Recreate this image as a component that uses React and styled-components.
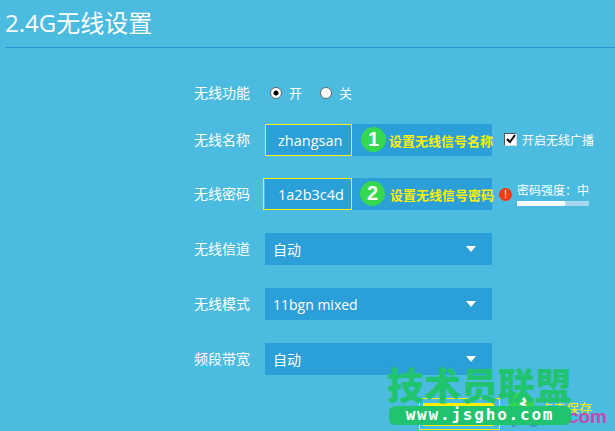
import React from "react";
import styled, { createGlobalStyle } from "styled-components";

const Global = createGlobalStyle`
  html, body { margin: 0; padding: 0; }
  body { background: #4bbbe0; }
`;

const FONT = `"Open Sans", "Noto Sans CJK SC", sans-serif`;

const Page = styled.div`
  position: relative;
  width: 615px;
  height: 431px;
  overflow: hidden;
  background: #4bbbe0;
  color: #fff;
  font-family: ${FONT};
`;
const Title = styled.h1`
  margin: 0 0 0 5px;
  height: 47px;
  border-bottom: 1px solid #2b95cf;
  font-size: 24px;
  font-weight: 400;
  line-height: 46px;
`;
const Form = styled.div`
  display: flex;
  flex-direction: column;
  padding: 35px 0 0 194px;
`;
const Row = styled.div`
  display: flex;
  align-items: center;
  height: ${(p) => p.$h || 32}px;
  margin-bottom: ${(p) => p.$mb ?? 23}px;
`;
const Label = styled.div`
  width: 71px;
  padding-bottom: 3px;
  font-size: 14px;
`;
const Radio = styled.span`
  box-sizing: border-box;
  width: 12px;
  height: 12px;
  margin: 0 7px 0 ${(p) => p.$ml || 5}px;
  border-radius: 50%;
  border: 1px solid #666;
  background: ${(p) => (p.$on ? "radial-gradient(circle, #000 0 2px, #fff 3px)" : "#fff")};
`;
const RadioText = styled.span`
  font-size: 13px;
  padding-bottom: 2px;
`;
const Field = styled.div`
  position: relative;
  display: flex;
  align-items: center;
  justify-content: space-between;
  width: 227px;
  height: 32px;
  padding: 0 16px 0 8px;
  box-sizing: border-box;
  background: #2b9fd8;
  font-size: 14px;
`;
const Arrow = styled.span`
  width: 0;
  height: 0;
  border-left: 5px solid transparent;
  border-right: 5px solid transparent;
  border-top: 6px solid #fff;
`;
const Callout = styled.div`
  position: absolute;
  top: 0;
  bottom: 0;
  left: ${(p) => p.$left}px;
  width: ${(p) => p.$w}px;
  display: flex;
  align-items: center;
  padding-left: ${(p) => p.$pad}px;
  border: 1px solid #ffef00;
  font-size: 14.5px;
  box-sizing: border-box;
`;
const Badge = styled.div`
  position: absolute;
  left: ${(p) => p.$left}px;
  top: ${(p) => p.$top}px;
  width: 25px;
  height: 25px;
  display: flex;
  align-items: center;
  justify-content: center;
  border-radius: 50%;
  background: #35d94f;
  color: #fff;
  font-family: "Liberation Sans", sans-serif;
  font-size: 20px;
  font-weight: 700;
`;
const Hint = styled.div`
  position: absolute;
  left: ${(p) => p.$left}px;
  top: ${(p) => p.$top}px;
  color: #ffef00;
  font-size: 13px;
  font-weight: 700;
  line-height: 16px;
  white-space: nowrap;
`;
const Side = styled.div`
  display: flex;
  align-items: center;
  margin-left: ${(p) => p.$ml}px;
  font-size: 12px;
`;
const Check = styled.span`
  box-sizing: border-box;
  width: 13px;
  height: 13px;
  margin: -2px 5px 0 0;
  background: #fff;
  border: 1px solid #555;
  border-right-color: #ddd;
  border-bottom-color: #ddd;
  display: flex;
  align-items: center;
  justify-content: center;
`;
const Warn = styled.span`
  width: 13px;
  height: 13px;
  margin-right: 5px;
  border-radius: 50%;
  background: #f53c0c;
  color: #fff;
  font-size: 10px;
  line-height: 13px;
  text-align: center;
`;
const Strength = styled.div`
  display: flex;
  flex-direction: column;
  gap: 2px;
  width: 72px;
  font-size: 12px;
  line-height: 17px;
`;
const Bar = styled.div`
  height: 5px;
  background: #a6d9ee;
`;
const BarFill = styled.div`
  height: 100%;
  background: #fff;
`;
const SaveFrame = styled.div`
  position: absolute;
  left: 419px;
  top: 398px;
  width: 81px;
  height: 32px;
  box-sizing: border-box;
  border: 1px solid #ffef00;
  padding: 4px 3px;
`;
const SaveInner = styled.div`
  width: 71px;
  height: 23px;
  box-sizing: border-box;
  border-top: 3px solid #ffef00;
  border-bottom: 1px solid #ffef00;
`;
const SaveHint = styled(Hint)`
  font-weight: 400;
`;
const Ghost = styled.div`
  position: absolute;
  right: 8px;
  top: 406px;
  color: #c04bb0;
  font-family: "Liberation Sans", sans-serif;
  font-size: 19px;
  font-weight: 700;
  white-space: nowrap;
`;
const GhostDim = styled.span`
  color: #3f94c4;
`;
const MarkTitle = styled.div`
  position: absolute;
  left: 387px;
  top: 356px;
  width: 186px;
  color: #20c46f;
  font-family: "Noto Sans CJK SC", sans-serif;
  font-size: 37px;
  font-weight: 900;
  line-height: 56px;
  white-space: nowrap;
`;
const MarkPill = styled.div`
  position: absolute;
  left: 389px;
  top: 406px;
  width: 182px;
  height: 19px;
  border-radius: 6px;
  background: #20c46f;
  color: #fff;
  font-family: "DejaVu Sans Mono", monospace;
  font-size: 16px;
  font-weight: 700;
  letter-spacing: 1.8px;
  line-height: 18px;
  text-align: center;
  white-space: nowrap;
`;

export default function App() {
  return (
    <Page>
      <Global />
      <Title>2.4G无线设置</Title>
      <Form>
        <Row $h={20} $mb={21}>
          <Label>无线功能</Label>
          <Radio $ml={5} $on />
          <RadioText>开</RadioText>
          <Radio $ml={18} />
          <RadioText>关</RadioText>
        </Row>
        <Row $mb={22}>
          <Label>无线名称</Label>
          <Field>
            <Callout $left={0} $w={87} $pad={12}>zhangsan</Callout>
            <Badge $left={96} $top={3}>1</Badge>
            <Hint $left={124} $top={9}>设置无线信号名称</Hint>
          </Field>
          <Side $ml={12}>
            <Check>
              <svg width="10" height="10" viewBox="0 0 10 10">
                <path d="M1 5l3 3 5-7" fill="none" stroke="#000" strokeWidth="2" />
              </svg>
            </Check>
            开启无线广播
          </Side>
        </Row>
        <Row $mb={23}>
          <Label>无线密码</Label>
          <Field>
            <Callout $left={-2} $w={89} $pad={14}>1a2b3c4d</Callout>
            <Badge $left={95} $top={3}>2</Badge>
            <Hint $left={125} $top={9}>设置无线信号密码</Hint>
          </Field>
          <Side $ml={7}>
            <Warn>!</Warn>
            <Strength>
              密码强度：中
              <Bar>
                <BarFill style={{ width: "66%" }} />
              </Bar>
            </Strength>
          </Side>
        </Row>
        <Row>
          <Label>无线信道</Label>
          <Field>自动<Arrow /></Field>
        </Row>
        <Row>
          <Label>无线模式</Label>
          <Field>11bgn mixed<Arrow /></Field>
        </Row>
        <Row>
          <Label>频段带宽</Label>
          <Field>自动<Arrow /></Field>
        </Row>
      </Form>
      <SaveFrame>
        <SaveInner />
      </SaveFrame>
      <Badge $left={509} $top={392}>3</Badge>
      <SaveHint $left={540} $top={400}>点击保存</SaveHint>
      <Ghost><GhostDim>jsgho.</GhostDim>com</Ghost>
      <MarkTitle>技术员联盟</MarkTitle>
      <MarkPill>www.jsgho.com</MarkPill>
    </Page>
  );
}
